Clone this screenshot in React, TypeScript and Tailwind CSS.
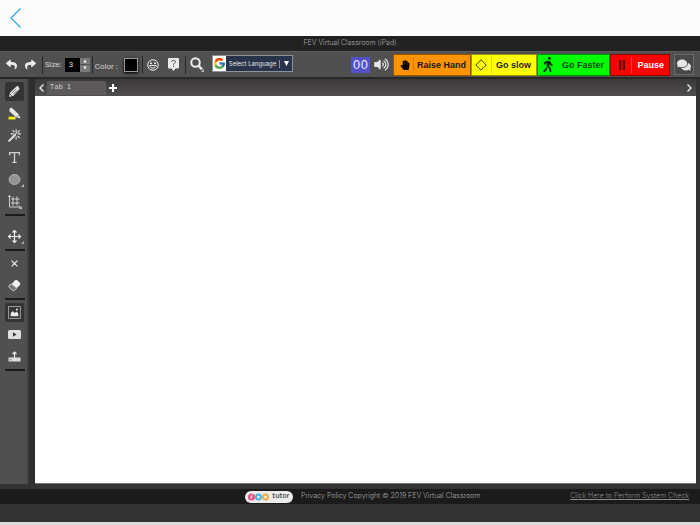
import { useState } from 'react';
import type { ReactNode } from 'react';
import { FaComments, FaHandPaper, FaReply, FaShare, FaVolumeUp, FaWalking } from 'react-icons/fa';
import { FcGoogle } from 'react-icons/fc';

const Separator = () => <div className="h-[18px] w-px bg-[#292929]" />;

const Divider = () => <div className="h-0.5 w-5 bg-[#1c1c1c]" />;

interface ToolProps {
  label: string;
  active?: boolean;
  onClick?: () => void;
  children: ReactNode;
}

const Tool = ({ label, active = false, onClick, children }: ToolProps) => (
  <button
    type="button"
    aria-label={label}
    onClick={onClick}
    className={`flex h-[19px] w-[19px] items-center justify-center rounded-xs text-[#e6e6e6] ${
      active ? 'bg-[#343434]' : ''
    }`}
  >
    {children}
  </button>
);

const PencilIcon = () => (
  <svg viewBox="0 0 24 24" className="size-[13px]" fill="currentColor">
    <path d="M2 22l2-8L15 3c2-2 4-1 5 1s2 3 0 5L10 20z" />
    <path d="M7 15l8-8M10 17l7-7M3.5 16.500l4 4" stroke="#444" strokeWidth="1.300" fill="none" />
  </svg>
);

const HighlighterIcon = () => (
  <svg viewBox="0 0 24 24" className="size-[13px]">
    <path d="M3 4c1-3 4-3 6-1l11 11 3 7-8-2L4 9C2 7 2 6 3 4z" fill="#e6e6e6" />
    <path d="M16 19l5-5" stroke="#666" strokeWidth="1.500" />
    <path d="M1 18h13v5H1z" fill="#f4ee12" />
  </svg>
);

const WandIcon = () => (
  <svg viewBox="0 0 24 24" className="size-[13px]" stroke="currentColor" strokeLinecap="round" fill="none">
    <path d="M2 22L13 11" strokeWidth="3.500" />
    <path
      d="M15 1v4M15 15v4M6 9h4M19 9h4M9 3l2.500 2.500M21 3l-3 3M21 16l-3-3M14 9l2-2"
      strokeWidth="2"
    />
  </svg>
);

const TextIcon = () => (
  <svg viewBox="0 0 24 24" className="size-[13px]" stroke="#cfcfcf" fill="none">
    <path d="M3 8V3h18v5M12 3v18M8 21h8" strokeWidth="2.400" />
  </svg>
);

const EllipseIcon = () => (
  <svg viewBox="0 0 34 28" className="ml-1 h-3.5 w-[17px] shrink-0">
    <ellipse cx="13" cy="13" rx="11" ry="10" fill="#929292" stroke="#c4c4c4" strokeWidth="1.500" />
    <path d="M32 22v6h-6z" fill="#bbb" />
  </svg>
);

const GridIcon = () => (
  <svg viewBox="0 0 28 28" className="size-3.5" stroke="#dadada" fill="none">
    <path d="M3 1v23h22M0 4l3-3 3 3M22 21l3 3-3 3" strokeWidth="1.800" />
    <path d="M10 3v18M18 3v18M6 8h17M6 16h17" strokeWidth="1.800" />
    <path d="M28 23v5h-5z" fill="#ccc" stroke="none" />
  </svg>
);

const MoveIcon = () => (
  <svg viewBox="0 0 34 28" className="ml-1 h-3.5 w-[17px] shrink-0" stroke="#ececec" fill="none">
    <path
      d="M13 1v24M1 13h24M9 5l4-4 4 4M9 21l4 4 4-4M5 9l-4 4 4 4M21 9l4 4-4 4"
      strokeWidth="2.400"
    />
    <path d="M32 22v6h-6z" fill="#aaa" stroke="none" />
  </svg>
);

const DeleteIcon = () => (
  <svg viewBox="0 0 12 12" className="size-[7px]" stroke="#f0f0f0" fill="none">
    <path d="M1 1l10 10M11 1L1 11" strokeWidth="2" />
  </svg>
);

const EraserIcon = () => (
  <svg viewBox="0 0 24 24" className="size-[13px]">
    <path d="M13 2.500c1-1 3-1 4 0L22 7c1 1 1 3 0 4l-6 6-9-8z" fill="#f0f0f0" />
    <path d="M7 9l9 8-4 4c-1 1-3 1-4 0l-6-6c-1-1-1-2 0-3z" fill="#777" stroke="#e0e0e0" strokeWidth="1.500" />
  </svg>
);

const ImageIcon = () => (
  <svg viewBox="0 0 24 24" className="size-[13px]">
    <path d="M1 1h22v22H1z" fill="none" stroke="#b5b5b5" strokeWidth="1.500" />
    <path d="M5 19v-6l4-4 3 4 4-3 3 4v5z" fill="#e8e8e8" />
    <circle cx="16.500" cy="6.500" r="2" fill="#e8e8e8" />
  </svg>
);

const VideoIcon = () => (
  <svg viewBox="0 0 26 18" className="h-[9px] w-[13px]">
    <rect width="26" height="18" rx="3" fill="#dedede" />
    <path d="M10 4.500l7 4.500-7 4.500z" fill="#333" />
  </svg>
);

const UploadIcon = () => (
  <svg viewBox="0 0 26 22" className="h-[11px] w-[13px]">
    <path d="M1 13h24v8H1z" fill="#dedede" />
    <path d="M13 14V3M9 6l4-4 4 4" stroke="#e8e8e8" strokeWidth="2.400" fill="none" />
    <path d="M3 17.500h4" stroke="#777" strokeWidth="2" />
  </svg>
);

const SmileIcon = () => (
  <svg viewBox="0 0 24 24" className="size-3" stroke="#eee" fill="none">
    <circle cx="12" cy="12" r="10.500" strokeWidth="2" />
    <circle cx="8" cy="8.500" r="2" fill="#eee" stroke="none" />
    <circle cx="16" cy="8.500" r="2" fill="#eee" stroke="none" />
    <path d="M5.500 13h13c-1 7-12 7-13 0z" strokeWidth="2" />
  </svg>
);

const HelpIcon = () => (
  <svg viewBox="0 0 22 26" className="h-[13px] w-[11px]">
    <path d="M2 0h18a2 2 0 012 2v17a2 2 0 01-2 2h-5l-4 5-4-5H2a2 2 0 01-2-2V2a2 2 0 012-2z" fill="#ececec" />
    <path d="M7.500 8c0-5 7.500-4.500 7.500-.500 0 3-4 2.500-4 6" stroke="#444" strokeWidth="2" fill="none" />
    <path d="M10 15.500h2v2.500h-2z" fill="#444" />
  </svg>
);

const SearchIcon = () => (
  <svg viewBox="0 0 28 30" className="h-[15px] w-3.5" stroke="#ececec" fill="none">
    <circle cx="11" cy="11" r="8.500" strokeWidth="4" />
    <path d="M17 17l7 8" strokeWidth="5" />
    <path d="M28 24v6h-6z" fill="#bbb" stroke="none" />
  </svg>
);

interface SignalProps {
  className: string;
  icon: ReactNode;
  children: ReactNode;
}

const SignalButton = ({ className, icon, children }: SignalProps) => (
  <button
    type="button"
    className={`flex h-[22px] items-center border border-black/40 font-['Liberation_Sans',sans-serif] text-[9px] font-bold whitespace-nowrap ${className}`}
  >
    {icon}
    <span className="pt-0.5">{children}</span>
  </button>
);

const Logo = () => (
  <a
    href="#tutor"
    className="flex h-3 w-12 items-center justify-center gap-0.5 rounded-full bg-[#ececec] font-['Open_Sans',sans-serif] text-[7px] font-semibold text-[#444]"
  >
    <svg viewBox="0 0 44 16" className="h-2 w-[22px]" fill="none">
      <circle cx="7" cy="8" r="7" fill="#e94e77" />
      <circle cx="21" cy="8" r="5" stroke="#4bb4d8" strokeWidth="4" fill="#d9edf3" />
      <circle cx="35" cy="8" r="5" stroke="#eab04c" strokeWidth="4" fill="#f5ead4" />
      <path d="M9.500 4.500c-2-1-3 0-3 2V12M4.500 8h4.500" stroke="#fff" strokeWidth="1.500" />
    </svg>
    tutor
  </a>
);

export default function App() {
  const [tool, setTool] = useState('Pencil');
  const [size, setSize] = useState(3);

  const select = (name: string) => ({
    label: name,
    active: tool === name,
    onClick: () => setTool(name),
  });

  return (
    <div className="flex h-screen flex-col bg-[#333] font-['Inter',sans-serif] text-[7px] text-[#a8a8a8]">
      <header className="flex h-9 shrink-0 items-center bg-[#fcfcfc] pl-2.5">
        <button type="button" aria-label="Back">
          <svg viewBox="0 0 11 20" className="h-5 w-[11px]" fill="none" stroke="#2ba5e0">
            <path d="M10.500 .5L1 10l9.500 9.500" strokeWidth="1.200" />
          </svg>
        </button>
      </header>

      <h1 className="flex h-[15px] shrink-0 items-center justify-center bg-[#222] font-light">
        FEV Virtual Classroom (iPad)
      </h1>

      <div className="flex h-[26px] shrink-0 items-center justify-between border-t border-[#5c5c5c] bg-[#505050] pr-1.5">
        <div className="flex items-center font-['Roboto',sans-serif]">
          <button type="button" aria-label="Undo" className="ml-1.5 text-[#ececec]">
            <FaReply className="size-[11px]" />
          </button>
          <button type="button" aria-label="Redo" className="mr-1.5 ml-2 text-[#ececec]">
            <FaShare className="size-[11px]" />
          </button>
          <Separator />
          <label htmlFor="size" className="mr-[3px] ml-0.5 text-[8px] text-[#d0d0d0]">
            Size:
          </label>
          <input
            id="size"
            type="text"
            value={size}
            onChange={(e) => setSize(Number(e.target.value) || 1)}
            className="h-3.5 w-[15px] bg-black pl-1 text-[8px] text-[#ddd]"
          />
          <div className="flex h-3.5 w-2.5 flex-col divide-y divide-[#555] bg-[#7a7a7a] text-white">
            <button
              type="button"
              aria-label="Increase size"
              onClick={() => setSize(size + 1)}
              className="flex flex-1 items-center justify-center"
            >
              <svg viewBox="0 0 4 4" className="size-1" fill="currentColor">
                <path d="M0.500 0.500h3L2 3.500z" transform="rotate(180 2 2)" />
              </svg>
            </button>
            <button
              type="button"
              aria-label="Decrease size"
              onClick={() => setSize(Math.max(1, size - 1))}
              className="flex flex-1 items-center justify-center"
            >
              <svg viewBox="0 0 4 4" className="size-1" fill="currentColor">
                <path d="M0.500 0.500h3L2 3.500z" />
              </svg>
            </button>
          </div>
          <div className="ml-0.5">
            <Separator />
          </div>
          <label htmlFor="color" className="mt-1 ml-0.5 w-[29px] text-[8px] whitespace-nowrap text-[#d0d0d0]">
            Color :
          </label>
          <button
            id="color"
            type="button"
            className="mr-1 size-3.5 border border-[#999] bg-black shadow-sm shadow-black"
          />
          <Separator />
          <button type="button" aria-label="Emoji" className="ml-1">
            <SmileIcon />
          </button>
          <button type="button" aria-label="Help" className="mr-1.5 ml-[9px]">
            <HelpIcon />
          </button>
          <Separator />
          <button type="button" aria-label="Zoom" className="ml-1">
            <SearchIcon />
          </button>
          <div className="mb-0.5 ml-2 flex h-[17px] w-[81px] items-center border border-[#8b929c] bg-[#29344a] text-[#e8e8e8]">
            <span className="flex h-full w-[13px] items-center justify-center bg-white">
              <FcGoogle className="size-[13px]" />
            </span>
            <select
              aria-label="Select Language"
              className="ml-[3px] w-[50px] appearance-none bg-transparent font-['Inter',sans-serif] text-[6px]"
            >
              <option>Select Language</option>
              <option>English</option>
              <option>Español</option>
            </select>
            <span className="h-2 w-px bg-[#8b929c]" />
            <svg viewBox="0 0 5 5" className="ml-1 size-[5px]" fill="#fff">
              <path d="M0 0h5L2.500 5z" />
            </svg>
          </div>
        </div>

        <div className="flex items-center">
          <span className="flex h-4 w-[19px] items-center justify-center bg-[#5353c6] font-['DejaVu_Sans',sans-serif] text-[12px] text-[#e4e4ff]">
            00
          </span>
          <button type="button" aria-label="Sound" className="mr-1 ml-1 text-[#e6e6e6]">
            <FaVolumeUp className="h-[13px] w-[15px]" />
          </button>
          <SignalButton
            className="w-[78px] justify-between bg-[#ff9300] pr-1 pl-1.5 text-[#24180a]"
            icon={
              <>
                <FaHandPaper className="size-2.5 text-black" />
                <span className="h-4 w-px bg-black/15" />
              </>
            }
          >
            Raise Hand
          </SignalButton>
          <SignalButton
            className="w-[66px] justify-between bg-[#ffff00] pr-[5px] pl-[3px] text-[#1d1d0a]"
            icon={
              <>
                <svg viewBox="0 0 12 12" className="size-3" fill="none" stroke="#3a3a00">
                  <path d="M6 .8L11.200 6 6 11.200 .8 6z" />
                </svg>
                <span className="h-4 w-px bg-black/15" />
              </>
            }
          >
            Go slow
          </SignalButton>
          <SignalButton
            className="w-[73px] justify-between bg-[#00ff00] px-[5px] text-[#0a3d0a]"
            icon={<FaWalking className="h-[15px] w-2.5 text-[#032603]" />}
          >
            Go Faster
          </SignalButton>
          <SignalButton
            className="w-[60px] justify-between bg-[#ff0000] pr-[5px] pl-2 text-white"
            icon={
              <>
                <svg viewBox="0 0 6 10" className="h-2.5 w-1.5" fill="#5c0000">
                  <path d="M0 0h2.300v10H0zM3.700 0H6v10H3.700z" />
                </svg>
                <span className="h-4 w-px bg-white/25" />
              </>
            }
          >
            Pause
          </SignalButton>
          <button
            type="button"
            aria-label="Chat"
            className="ml-1 flex h-[21px] w-5 items-center justify-center border border-[#6b6b6b] bg-[#494949] text-[#e6e6e6]"
          >
            <FaComments className="size-3.5" />
          </button>
        </div>
      </div>
      <div className="h-0.5 shrink-0 bg-[#282828]" />

      <div className="flex min-h-0 flex-1">
        <aside className="flex w-[27px] shrink-0 flex-col items-center gap-[3px] bg-[#505050] pt-[3px] pl-0.5">
          <Tool {...select('Pencil')}>
            <PencilIcon />
          </Tool>
          <Tool {...select('Highlighter')}>
            <HighlighterIcon />
          </Tool>
          <Tool {...select('Wand')}>
            <WandIcon />
          </Tool>
          <Tool {...select('Text')}>
            <TextIcon />
          </Tool>
          <Tool {...select('Shapes')}>
            <EllipseIcon />
          </Tool>
          <Tool {...select('Grid')}>
            <GridIcon />
          </Tool>
          <Divider />
          <div className="mt-2">
            <Tool {...select('Move')}>
              <MoveIcon />
            </Tool>
          </div>
          <Divider />
          <Tool label="Delete">
            <DeleteIcon />
          </Tool>
          <Tool {...select('Eraser')}>
            <EraserIcon />
          </Tool>
          <Divider />
          <Tool label="Image" active>
            <ImageIcon />
          </Tool>
          <Tool label="Video">
            <VideoIcon />
          </Tool>
          <Tool label="Upload">
            <UploadIcon />
          </Tool>
          <Divider />
        </aside>
        <div className="w-2 shrink-0 border-l-2 border-[#3f3f3f] bg-[#2e2e2e]" />

        <main className="flex min-w-0 flex-1 flex-col pr-1">
          <div className="flex h-[17px] shrink-0 items-center bg-linear-to-b from-[#3a3839] to-[#504e4f] text-[#e6e6e6]">
            <button type="button" aria-label="Previous tab" className="flex w-3 justify-center">
              <svg viewBox="0 0 5 8" className="h-2 w-[5px]" fill="none" stroke="currentColor">
                <path d="M4.500 .5L1 4l3.500 3.500" strokeWidth="1.500" />
              </svg>
            </button>
            <button
              type="button"
              className="h-3.5 w-[59px] bg-[#5c5a5b] pl-[3px] text-left font-['DejaVu_Sans_Mono',monospace] text-[7px] text-[#d0d0d0]"
            >
              Tab 1
            </button>
            <button type="button" aria-label="Add tab" className="ml-[3px]">
              <svg viewBox="0 0 8 8" className="size-2" fill="#fff">
                <path d="M3 0h2v3h3v2H5v3H3V5H0V3h3z" />
              </svg>
            </button>
            <button type="button" aria-label="Next tab" className="mr-1 ml-auto">
              <svg viewBox="0 0 5 8" className="h-2 w-[5px]" fill="none" stroke="currentColor">
                <path d="M.5 .5L4 4 .5 7.500" strokeWidth="1.500" />
              </svg>
            </button>
          </div>
          <div className="flex-1 border-b border-[#777] bg-white" />
        </main>
      </div>

      <footer className="shrink-0 border-b-3 border-[#dcdada] pt-[5px] pb-[18px]">
        <div className="flex h-[15px] items-center gap-2 bg-[#1b1b1b] pr-[11px] pl-[35%] font-light">
          <Logo />
          <p>Privacy Policy Copyright © 2019 FEV Virtual Classroom</p>
          <a href="#system-check" className="ml-auto text-[#8c8c8c] underline">
            Click Here to Perform System Check
          </a>
        </div>
      </footer>
    </div>
  );
}
